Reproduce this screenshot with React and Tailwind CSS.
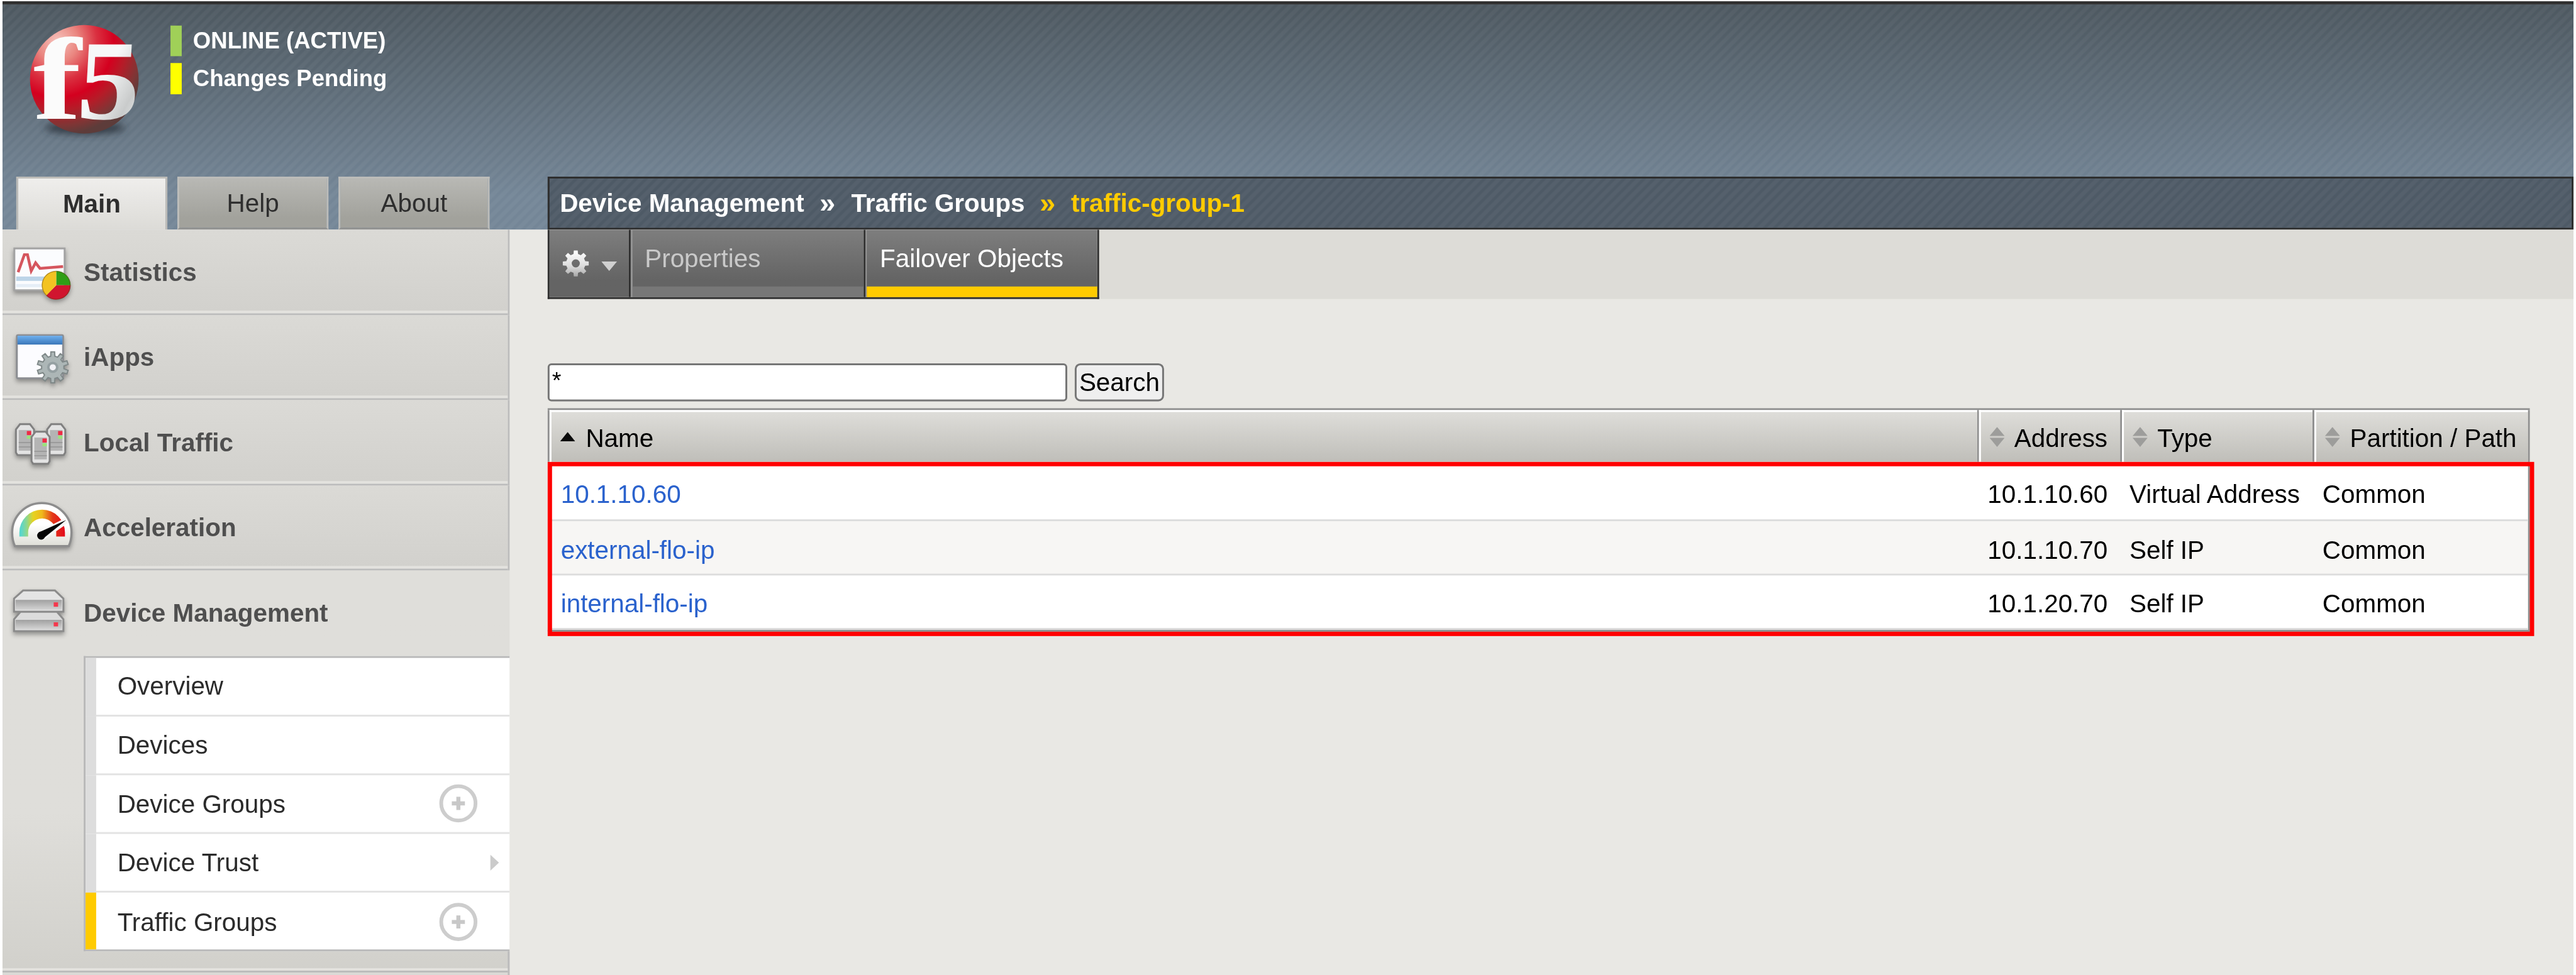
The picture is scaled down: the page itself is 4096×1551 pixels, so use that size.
import React from "react";

function Logo() {
  return (
    <svg width="190" height="190" viewBox="40 36 190 190" className="overflow-visible">
      <defs>
        <radialGradient id="ball" gradientUnits="userSpaceOnUse" cx="92" cy="66" r="150">
          <stop offset="0" stopColor="#f6c3bd" />
          <stop offset="0.22" stopColor="#ea8680" />
          <stop offset="0.42" stopColor="#da3040" />
          <stop offset="0.6" stopColor="#d4001f" />
          <stop offset="0.74" stopColor="#b51c28" />
          <stop offset="0.9" stopColor="#803535" />
          <stop offset="1" stopColor="#5d3c3a" />
        </radialGradient>
        <linearGradient id="five" x1="0" y1="0" x2="1" y2="1">
          <stop offset="0.45" stopColor="#f6f8f8" />
          <stop offset="0.75" stopColor="#c9cbcb" />
          <stop offset="1" stopColor="#f4f8f8" />
        </linearGradient>
        <filter id="soft" x="-20%" y="-60%" width="140%" height="220%">
          <feGaussianBlur stdDeviation="6" />
        </filter>
      </defs>
      <ellipse cx="136" cy="205" rx="64" ry="10" fill="#2b333b" opacity="0.85" filter="url(#soft)" />
      <circle cx="135" cy="127" r="87" fill="url(#ball)" />
      <g fontFamily="'Liberation Serif', serif" fontWeight="700" className="leading-none">
        <text transform="translate(53 190.5) scale(1.24 1)" fontSize="187" fill="#fbfbfb">f</text>
        <text transform="translate(121 190) scale(1.1 1) skewX(-3)" fontSize="182" fill="url(#five)">5</text>
      </g>
    </svg>
  );
}

const shadow = "overflow-visible drop-shadow-[0_4px_4px_rgba(0,0,0,0.35)]";

function gearPath(cx, cy, outer, inner, teeth) {
  const pts = [];
  const step = (Math.PI * 2) / teeth;
  for (let i = 0; i < teeth; i++) {
    const a = i * step - Math.PI / 2;
    [
      [inner, -0.3],
      [outer, -0.19],
      [outer, 0.19],
      [inner, 0.3],
    ].forEach(([r, k]) => {
      pts.push(`${(cx + r * Math.cos(a + k * step)).toFixed(2)},${(cy + r * Math.sin(a + k * step)).toFixed(2)}`);
    });
  }
  return `M${pts.join("L")}Z`;
}

function StatisticsIcon() {
  return (
    <svg width="130" height="100" viewBox="4 383 130 100" className={shadow}>
      <rect x="23" y="398" width="80.500" height="67" fill="#fbfcfe" stroke="#a3a3a3" strokeWidth="3" />
      <rect x="26" y="443" width="46" height="7" fill="#bcd4e8" />
      <rect x="26" y="455" width="44" height="5" fill="#e6eef7" />
      <path d="M29 436L39 408L44 408L50 434L57 421L64 430L101 427" fill="none" stroke="#d5565e" strokeWidth="4.500" />
      <path d="M90 457V434A23 23 0 0 1 113 457Z" fill="#2f9e16" />
      <path d="M90 457H113A23 23 0 0 1 74 473.500Z" fill="#d0152f" />
      <path d="M90 457L74 473.500A23 23 0 0 1 90 434Z" fill="#f3c322" />
      <circle cx="90" cy="457" r="22.500" fill="none" stroke="#5a3a10" strokeOpacity="0.4" strokeWidth="1.500" />
    </svg>
  );
}

function IAppsIcon() {
  return (
    <svg width="130" height="100" viewBox="4 519 130 100" className={shadow}>
      <defs>
        <linearGradient id="bar" x1="0" y1="0" x2="0" y2="1">
          <stop offset="0" stopColor="#6eb0ef" />
          <stop offset="1" stopColor="#3a76b8" />
        </linearGradient>
      </defs>
      <rect x="27" y="537" width="74" height="69" rx="2" fill="#fcfcff" stroke="#8b8d92" strokeWidth="3" />
      <rect x="28" y="538" width="72" height="14" fill="url(#bar)" />
      <path d={gearPath(84.5, 588.5, 25, 18, 10)} fill="#acb6b6" stroke="#7f8888" strokeWidth="2" />
      <circle cx="84.500" cy="588.500" r="9" fill="#95a0a2" />
      <circle cx="84.500" cy="588.500" r="5" fill="#f2f2f6" />
    </svg>
  );
}

function Tower({ x, y, h }) {
  return (
    <g transform={`translate(${x} ${y})`}>
      <path
        d={`M1.500 10L8 1.500H24L30.500 10V${h - 4}L28 ${h}H4L1.500 ${h - 4}Z`}
        fill="#e3e3e3"
        stroke="#808080"
        strokeWidth="3"
      />
      <rect x="6" y="11" width="20" height={h - 18} fill="#b4b4b4" />
      <path d={`M6 ${h - 20}H26M6 ${h - 13}H26`} stroke="#9b9b9b" strokeWidth="2" />
      <rect x="19" y="12.500" width="7" height="6.500" fill="#ee2b45" />
      <rect x="19" y="20" width="7" height="5" fill="#9be37c" />
    </g>
  );
}

function LocalTrafficIcon() {
  return (
    <svg width="130" height="100" viewBox="4 656 130 100" className={shadow}>
      <Tower x={24} y={678} h={51} />
      <Tower x={74} y={678} h={51} />
      <Tower x={49} y={690} h={53} />
    </svg>
  );
}

function AccelerationIcon() {
  return (
    <svg width="130" height="100" viewBox="4 792 130 100" className={shadow}>
      <defs>
        <linearGradient id="dial" gradientUnits="userSpaceOnUse" x1="34" y1="0" x2="108" y2="0">
          <stop offset="0" stopColor="#5bd6cc" />
          <stop offset="0.12" stopColor="#8fd78e" />
          <stop offset="0.26" stopColor="#e6d320" />
          <stop offset="0.45" stopColor="#efb81c" />
          <stop offset="0.68" stopColor="#e3381a" />
          <stop offset="1" stopColor="#e3001b" />
        </linearGradient>
        <linearGradient id="dome" x1="0" y1="0" x2="0" y2="1">
          <stop offset="0.5" stopColor="#ffffff" />
          <stop offset="1" stopColor="#deded6" />
        </linearGradient>
      </defs>
      <path
        d="M24 875C20 867 19.500 860 19.500 853A47.500 47 0 0 1 114.500 853C114.500 860 114 867 110 875Z"
        fill="url(#dome)"
        stroke="#8d8d8d"
        strokeWidth="3.500"
      />
      <path d="M38 859.500V853A29.500 29.500 0 0 1 97 853V859.500" fill="none" stroke="url(#dial)" strokeWidth="14" />
      <path d="M61 855L103 833.500L106 837L70 862Z" fill="#f8f8f6" stroke="#f8f8f6" strokeWidth="5" />
      <path d="M62 853L106 833L70 862Z" fill="#050505" />
      <circle cx="66" cy="858" r="6.500" fill="#050505" />
    </svg>
  );
}

function DeviceIcon() {
  return (
    <svg width="130" height="100" viewBox="4 932 130 100" className={shadow}>
      <defs>
        <linearGradient id="unit" x1="0" y1="0" x2="0" y2="1">
          <stop offset="0" stopColor="#a0a0a0" />
          <stop offset="1" stopColor="#d4d4d4" />
        </linearGradient>
      </defs>
      <path d="M22.500 1011V992L33 980H91L101.500 992V1011Z" fill="#dcdcdc" stroke="#8b8b8b" strokeWidth="3" />
      <rect x="25" y="993" width="74" height="15" fill="url(#unit)" />
      <path d="M22.500 980V959L37 946H88L101.500 959V980Z" fill="#e4e4e4" stroke="#8b8b8b" strokeWidth="3" />
      <rect x="25" y="961" width="74" height="16" fill="url(#unit)" />
      <rect x="86" y="965" width="7" height="7" fill="#f4384d" />
      <rect x="86" y="997" width="7" height="6.500" fill="#f4384d" />
    </svg>
  );
}

function CogIcon() {
  return (
    <svg width="44" height="44" viewBox="0 0 44 44" className="overflow-visible">
      <defs>
        <linearGradient id="cog" x1="0" y1="0" x2="0" y2="1">
          <stop offset="0" stopColor="#ffffff" />
          <stop offset="0.6" stopColor="#dcdcdc" />
          <stop offset="1" stopColor="#a8a8a8" />
        </linearGradient>
      </defs>
      <path
        d={gearPath(22, 22, 21, 15.5, 8) + "M28.500 22a6.500 6.500 0 1 0 -13 0a6.500 6.500 0 1 0 13 0Z"}
        fill="url(#cog)"
        fillRule="evenodd"
      />
    </svg>
  );
}

function NavItem({ icon, label }) {
  return (
    <div className="flex h-[136.5px] flex-col border-r-[3px] border-[#bcbcbc]">
      <div className="flex grow items-center bg-linear-to-b from-[#dbdad6] to-[#d2d1cd] text-[40.7px] font-bold text-[#4f4f4f]">
        {icon}
        <span className="pt-[7px]">{label}</span>
      </div>
      <div className="h-[4px] bg-[#e3e2de]" />
      <div className="h-[3px] bg-[#bcbcbc]" />
    </div>
  );
}

function PlusBadge() {
  return (
    <svg width="62" height="62" viewBox="0 0 62 62">
      <circle cx="31" cy="31" r="27.500" fill="none" stroke="#cdcdcd" strokeWidth="6" />
      <path d="M31 20.500V41.500M20.500 31H41.500" stroke="#c8c8c8" strokeWidth="6.500" />
    </svg>
  );
}

function SubItem({ label, mark, active, last }) {
  return (
    <div className="flex h-[94.2px]">
      <div className={active ? "w-[17.5px] bg-[#ffcb00]" : "w-[17.5px] bg-[#dddddd]"} />
      <div
        className={
          "flex grow items-center justify-between pl-[34px] text-[40.7px] text-[#2b2b2b] " +
          (last ? "" : "border-b-[3px] border-[#e3e3e3]")
        }
      >
        <span className="pt-[1px]">{label}</span>
        {mark === "plus" && (
          <div className="mr-[51px]">
            <PlusBadge />
          </div>
        )}
        {mark === "arrow" && (
          <svg width="14" height="26" viewBox="0 0 14 26" className="mr-[17px]">
            <path d="M0 0L14 13L0 26Z" fill="#cbcbcb" />
          </svg>
        )}
      </div>
    </div>
  );
}

function SortIcon() {
  return (
    <svg width="24" height="32" viewBox="0 0 24 32" className="mb-[1px]">
      <path d="M0 14.500L12 0L24 14.500Z" fill="#9d9d9b" />
      <path d="M0 17.500L12 32L24 17.500Z" fill="#9d9d9b" />
    </svg>
  );
}

const cols = "grid grid-cols-[2291.5px_229px_308.500px_345px]";

function HeadCell({ children, first }) {
  return (
    <div
      className={
        "flex h-[83px] items-center border-t-[3px] border-l-[3.5px] border-white bg-linear-to-b from-[#deddd9] to-[#bfbeb9] pt-[1px] " +
        (first ? "gap-[17px] pl-[14px]" : "gap-[16px] pl-[14px]")
      }
    >
      {children}
    </div>
  );
}

const rows = [
  { name: "10.1.10.60", address: "10.1.10.60", type: "Virtual Address", path: "Common" },
  { name: "external-flo-ip", address: "10.1.10.70", type: "Self IP", path: "Common" },
  { name: "internal-flo-ip", address: "10.1.20.70", type: "Self IP", path: "Common" },
];

const rowClass = [
  "h-[95.5px] bg-white pt-[14px] border-b-[3.5px] border-[#dcdcdc]",
  "h-[87px] bg-[#f7f6f4] pt-[8px] border-b-[3.5px] border-[#dcdcdc]",
  "h-[86.5px] bg-white pt-[8px] border-b-[3.5px] border-[#dcdcdc]",
];

const stripes =
  "bg-[repeating-linear-gradient(135deg,rgba(255,255,255,0.04)_0px,rgba(255,255,255,0.04)_4.5px,transparent_6.5px,transparent_9.300px,rgba(255,255,255,0.04)_11.3px)]";

export default function App() {
  return (
    <div className="h-[1551px] w-[4096px] overflow-hidden bg-white font-['Liberation_Sans',Arial,sans-serif]">
      <div className="flex h-[1562px] w-[4125px] origin-top-left scale-[0.99297] flex-col pt-[2px] pr-[4px] pl-[4px] leading-[1.15]">
        {/* Banner */}
        <header className="h-[366px] border-t-[5px] border-[#303030] bg-linear-to-b from-[#4d5860] to-[#748697] to-85%">
          <div className={"flex h-full flex-col justify-between " + stripes}>
            <div className="flex pt-[29px] pl-[36px]">
              <Logo />
              <div className="ml-[43px] flex flex-col gap-[10.5px] pt-[5px] text-[36.8px] font-bold text-white">
                <div className="flex h-[49px] items-center gap-[18.5px]">
                  <div className="h-full w-[17.5px] bg-[#a0d058]" />
                  <span className="pt-[2px]">ONLINE (ACTIVE)</span>
                </div>
                <div className="flex h-[50px] items-center gap-[18.5px]">
                  <div className="h-full w-[17.5px] bg-[#ffff00]" />
                  <span className="pt-[2px]">Changes Pending</span>
                </div>
              </div>
            </div>
            <div className="flex h-[85.5px]">
              <nav className="flex w-[873px] gap-[16px] pl-[22px] text-[40.7px] text-[#2e2e2e]">
                <div className="flex w-[242px] items-center justify-center border-x-[3.5px] border-t-[3.5px] border-[#bebdb9] bg-linear-to-b from-[#efeeec] to-[#dcdbd7] font-bold">
                  Main
                </div>
                <div className="flex w-[242px] items-center justify-center border-[3px] border-x-[#bdbdba] border-t-[#bdbdba] border-b-[#939391] bg-linear-to-b from-[#b8b8b4] to-[#a2a29c] to-80%">
                  Help
                </div>
                <div className="flex w-[242px] items-center justify-center border-[3px] border-x-[#bdbdba] border-t-[#bdbdba] border-b-[#939391] bg-linear-to-b from-[#b8b8b4] to-[#a2a29c] to-80%">
                  About
                </div>
              </nav>
              <div className="grow border-[3px] border-[#2e2e2e] bg-[#4e5a66]">
                <div className={"flex h-full items-center pl-[16.5px] text-[40.7px] font-bold whitespace-pre text-white " + stripes}>
                  <span className="w-[416px]">Device Management</span>
                  <span className="w-[50.5px] text-[45px]">»</span>
                  <span className="w-[302px]">Traffic Groups</span>
                  <span className="w-[50px] text-[45px] text-[#ffcb00]">»</span>
                  <span className="text-[#ffcb00]">traffic-group-1</span>
                </div>
              </div>
            </div>
          </div>
        </header>

        <div className="flex h-[1194px] bg-[#e9e8e4]">
          {/* Sidebar */}
          <aside className="flex w-[812px] flex-col">
            <NavItem icon={<StatisticsIcon />} label="Statistics" />
            <NavItem icon={<IAppsIcon />} label="iApps" />
            <NavItem icon={<LocalTrafficIcon />} label="Local Traffic" />
            <NavItem icon={<AccelerationIcon />} label="Acceleration" />
            <div className="flex grow flex-col bg-linear-to-b from-[#dfdeda] from-60% to-[#d1d0cb]">
              <div className="flex h-[136.500px] items-center text-[40.7px] font-bold text-[#4f4f4f]">
                <DeviceIcon />
                <span>Device Management</span>
              </div>
              <div className="ml-[129.5px] h-[473.5px] overflow-hidden border-y-[3px] border-l-[3px] border-[#b9b9b9] bg-white">
                <SubItem label="Overview" />
                <SubItem label="Devices" />
                <SubItem label="Device Groups" mark="plus" />
                <SubItem label="Device Trust" mark="arrow" />
                <SubItem label="Traffic Groups" mark="plus" active last />
              </div>
              <div className="flex grow flex-col border-r-[3px] border-[#bcbcbc]">
                <div className="grow" />
                <div className="h-[4px] bg-[#e3e2de]" />
                <div className="h-[3.5px] bg-[#bcbcbc]" />
                <div className="h-[4px] bg-[#dbdad6]" />
              </div>
            </div>
          </aside>

          <main className="flex grow flex-col pl-[61px]">
            {/* Section tabs */}
            <div className="flex h-[111px] bg-[#dddcd7]">
              <div className="flex h-full border-x-[3px] border-b-[3px] border-[#2e2e2e] text-[40.7px]">
                <div className="flex w-[126.5px] items-center bg-linear-to-b from-[#7e7e7e] to-[#646464] to-75% pl-[20px]">
                  <CogIcon />
                  <svg width="25" height="15" viewBox="0 0 25 15" className="mt-[8px] ml-[19px]">
                    <path d="M0 0H25L12.500 15Z" fill="#d0d0d0" />
                  </svg>
                </div>
                <div className="flex w-[376px] flex-col border-l-[3px] border-[#2e2e2e] bg-linear-to-b from-[#7e7e7e] to-[#646464] to-75%">
                  <div className="flex grow flex-col border-l-[3px] border-[#939393]">
                    <div className="flex grow items-center pt-[2px] pl-[20px] text-[#c9c9c9]">Properties</div>
                    <div className="h-[17px] bg-[#777777]" />
                  </div>
                </div>
                <div className="flex w-[374.5px] flex-col border-l-[3px] border-[#2e2e2e] bg-linear-to-b from-[#7e7e7e] to-[#646464] to-75%">
                  <div className="flex grow flex-col border-l-[2px] border-[#939393]">
                    <div className="flex grow items-center pt-[2px] pl-[21.5px] text-white">Failover Objects</div>
                    <div className="h-[17px] bg-[#ffcb00]" />
                  </div>
                </div>
              </div>
            </div>

            {/* Filter */}
            <div className="mt-[102.5px] flex h-[61px] gap-[12px] text-[40.7px] text-black">
              <div className="w-[832px] rounded-[6px] border-[3px] border-[#767676] bg-white pt-[3px] pl-[4px] text-[38px]">*</div>
              <div className="flex w-[143px] items-center justify-center rounded-[9px] border-[3px] border-[#767676] bg-[#efefef]">
                Search
              </div>
            </div>

            {/* Failover object table */}
            <div className="relative mt-[11px] w-[3174px] text-[40.7px] text-black">
              <div className={cols + " border-t-[3.5px] border-[#8f8f8f]"}>
                <div className="border-x-[3px] border-[#8f8f8f]">
                  <HeadCell first>
                    <svg width="24" height="15" viewBox="0 0 24 15" className="mb-[1px]">
                      <path d="M0 15L12 0L24 15Z" fill="#0a0a0a" />
                    </svg>
                    <span className="pt-[4px]">Name</span>
                  </HeadCell>
                </div>
                <div className="border-r-[3px] border-[#8f8f8f]">
                  <HeadCell>
                    <SortIcon />
                    <span className="pt-[4px]">Address</span>
                  </HeadCell>
                </div>
                <div className="border-r-[3px] border-[#8f8f8f]">
                  <HeadCell>
                    <SortIcon />
                    <span className="pt-[4px]">Type</span>
                  </HeadCell>
                </div>
                <div className="border-r-[3px] border-[#8f8f8f]">
                  <HeadCell>
                    <SortIcon />
                    <span className="pt-[4px]">Partition / Path</span>
                  </HeadCell>
                </div>
              </div>
              <div className="relative border-r-[3px] border-b-[3px] border-[#8f8f8f]">
                {rows.map((r, i) => (
                  <div key={r.name} className={cols + " w-[3171px] items-center overflow-hidden " + rowClass[i]}>
                    <span className="pl-[21px] text-[#2a62cd]">{r.name}</span>
                    <span className="pr-[22.5px] text-right">{r.address}</span>
                    <span className="pl-[12.5px]">{r.type}</span>
                    <span className="pl-[13px]">{r.path}</span>
                  </div>
                ))}
                {/* Highlight frame */}
                <div className="absolute top-0 left-0 h-[279px] w-[3181px] border-[7px] border-[#ff0000]" />
              </div>
            </div>
          </main>
        </div>
      </div>
    </div>
  );
}
